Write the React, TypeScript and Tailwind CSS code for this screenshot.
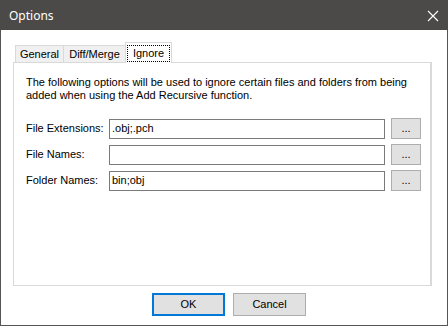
import React from 'react';

const fieldRows = [
    { label: 'File Extensions:', value: '.obj;.pch' },
    { label: 'File Names:', value: '' },
    { label: 'Folder Names:', value: 'bin;obj' },
];

const CloseIcon = () => (
    <svg width="12" height="12" viewBox="0 0 12 12" className="block">
        <path d="M1 1 L11 11 M11 1 L1 11" stroke="#ffffff" strokeWidth="1.1" />
    </svg>
);

const App = () => {
    return (
        <div className="w-[448px] h-[326px] border border-[#565553] bg-white flex flex-col font-['Liberation_Sans',Arial,sans-serif] text-[11px] text-black">
            {/* title bar */}
            <div className="h-[30px] bg-[#4b4a48] flex items-center justify-between pl-[9px] pr-[9px] -mx-px -mt-px pt-px">
                <span className="text-white text-[12px] font-['Noto_Sans',sans-serif]">Options</span>
                <CloseIcon />
            </div>

            <div className="flex-1 pl-[12px] pt-[12px]">
                {/* tabs */}
                <div className="h-[20px] flex items-end pl-[2px]">
                    <div className="w-[49px] h-[17px] border border-b-0 border-[#d9d9d9] bg-[#f0f0f0] flex items-center justify-center">
                        General
                    </div>
                    <div className="w-[62px] h-[17px] border border-l-0 border-b-0 border-[#d9d9d9] bg-[#f0f0f0] flex items-center justify-center">
                        Diff/Merge
                    </div>
                    <div className="relative z-10 -ml-px -mb-px w-[47px] h-[21px] border border-b-0 border-[#d9d9d9] bg-white pt-[2px] px-px">
                        <div className="h-[17px] border border-dotted border-black flex items-center justify-center">
                            Ignore
                        </div>
                    </div>
                </div>

                {/* tab page */}
                <div className="w-[419px] h-[224px] border border-r-2 border-[#d9d9d9] bg-white pl-[12px] pt-[13px]">
                    <p className="leading-[13px]">
                        The following options will be used to ignore certain files and folders from being
                        <br />
                        added when using the Add Recursive function.
                    </p>
                    <div className="mt-[16px] flex flex-col gap-[5px]">
                        {fieldRows.map((row) => (
                            <div key={row.label} className="h-[21px] flex items-center">
                                <label className="w-[83px]">{row.label}</label>
                                <div className="w-[276px] h-[20px] border border-[#7a7a7a] bg-white pl-[2px] flex items-center">
                                    {row.value}
                                </div>
                                <button className="ml-[6px] w-[30px] h-[21px] border border-[#adadad] bg-[#e1e1e1] flex items-center justify-center leading-none">
                                    ...
                                </button>
                            </div>
                        ))}
                    </div>
                </div>

                {/* dialog buttons */}
                <div className="mt-[7px] pl-[139px] flex gap-[8px]">
                    <button className="w-[73px] h-[23px] border-2 border-[#0078d7] bg-[#e1e1e1] flex items-center justify-center">
                        OK
                    </button>
                    <button className="w-[73px] h-[23px] border border-[#adadad] bg-[#e1e1e1] flex items-center justify-center">
                        Cancel
                    </button>
                </div>
            </div>
        </div>
    );
};

export default App;
